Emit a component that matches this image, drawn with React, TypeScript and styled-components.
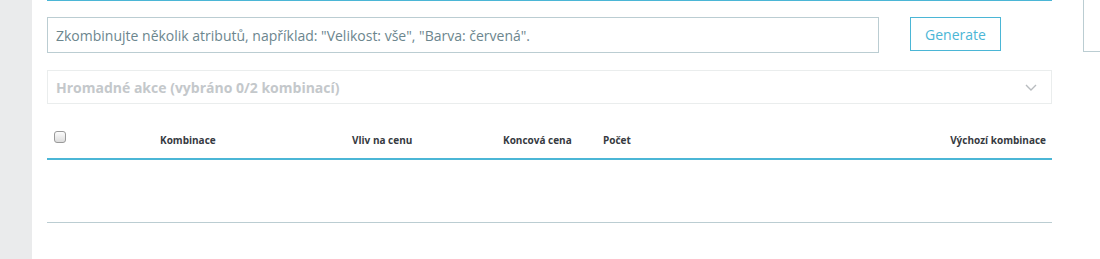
import * as React from 'react'
import styled, { createGlobalStyle } from 'styled-components'

const GlobalStyle = createGlobalStyle`
  html, body {
    margin: 0;
    padding: 0;
    background: #fff;
    font-family: "Open Sans", "Liberation Sans", sans-serif;
  }
`

const Page = styled.div`
  display: flex;
  height: 259px;
  overflow: hidden;
`

const Sidebar = styled.div`
  width: 32px;
  flex-shrink: 0;
  background: #eaebec;
`

const Main = styled.div`
  flex: 1;
  display: flex;
  padding-left: 15px;
  gap: 31px;
`

const Content = styled.div`
  width: 1005px;
  flex-shrink: 0;
  border-top: 1px solid #4bb6d6;
  display: flex;
  flex-direction: column;
`

const SideBox = styled.div`
  flex: 1;
  height: 52px;
  border-left: 1px solid #bbcdd2;
  border-bottom: 1px solid #bbcdd2;
  box-sizing: border-box;
`

const GenerateRow = styled.div`
  display: flex;
  align-items: flex-start;
  gap: 31px;
  margin-top: 16px;
`

const AttrInput = styled.input`
  width: 832px;
  height: 36px;
  box-sizing: border-box;
  border: 1px solid #bbcdd2;
  padding: 0 8px;
  font-family: inherit;
  font-size: 14px;
  color: #363a41;
  outline: none;
  &::placeholder {
    color: #6c868e;
  }
`

const GenerateButton = styled.button`
  width: 91px;
  height: 34px;
  box-sizing: border-box;
  background: #fff;
  border: 1px solid #4bb6d6;
  color: #4bb6d6;
  font-family: inherit;
  font-size: 14px;
  padding: 0;
`

const BulkBar = styled.div`
  margin-top: 17px;
  height: 34px;
  box-sizing: border-box;
  border: 1px solid #eaeded;
  display: flex;
  align-items: center;
  justify-content: space-between;
  padding: 0 14px 0 8px;
  font-size: 14px;
  font-weight: 700;
  color: #c4c8cb;
`

const Chevron = styled.svg`
  width: 12px;
  height: 7px;
`

const HeadRow = styled.div`
  margin-top: 22px;
  height: 32px;
  display: grid;
  grid-template-columns: 113px 192px 151px 100px auto 1fr;
  align-items: start;
  border-bottom: 2px solid #4bb6d6;
  font-size: 10px;
  font-weight: 700;
  color: #363a41;
  padding-right: 6px;
`

const HeadCell = styled.div<{ $right?: boolean }>`
  text-align: ${(p) => (p.$right ? 'right' : 'left')};
  padding-top: 7px;
  line-height: 14px;
  white-space: nowrap;
`

const CheckCell = styled.div`
  padding-left: 7px;
  padding-top: 5px;
  display: flex;
`

const Check = styled.input`
  appearance: none;
  margin: 0;
  width: 12px;
  height: 12px;
  box-sizing: border-box;
  border: 1px solid #9a9a9a;
  border-radius: 3px;
  background: linear-gradient(#fcfcfc, #dcdcdc);
`

const EmptyBody = styled.div`
  height: 62px;
  border-bottom: 1px solid #bbcdd2;
`

export default function App() {
  return (
    <>
      <GlobalStyle />
      <Page>
        <Sidebar />
        <Main>
          <Content>
            <GenerateRow>
              <AttrInput placeholder={'Zkombinujte několik atributů, například: "Velikost: vše", "Barva: červená".'} />
              <GenerateButton>Generate</GenerateButton>
            </GenerateRow>
            <BulkBar>
              <span>Hromadné akce (vybráno 0/2 kombinací)</span>
              <Chevron viewBox="0 0 12 7">
                <path d="M1 1l5 5 5-5" fill="none" stroke="#b8bcbf" strokeWidth="1.4" />
              </Chevron>
            </BulkBar>
            <HeadRow>
              <CheckCell>
                <Check type="checkbox" />
              </CheckCell>
              <HeadCell>Kombinace</HeadCell>
              <HeadCell>Vliv na cenu</HeadCell>
              <HeadCell>Koncová cena</HeadCell>
              <HeadCell>Počet</HeadCell>
              <HeadCell $right>Výchozí kombinace</HeadCell>
            </HeadRow>
            <EmptyBody />
          </Content>
          <SideBox />
        </Main>
      </Page>
    </>
  )
}
